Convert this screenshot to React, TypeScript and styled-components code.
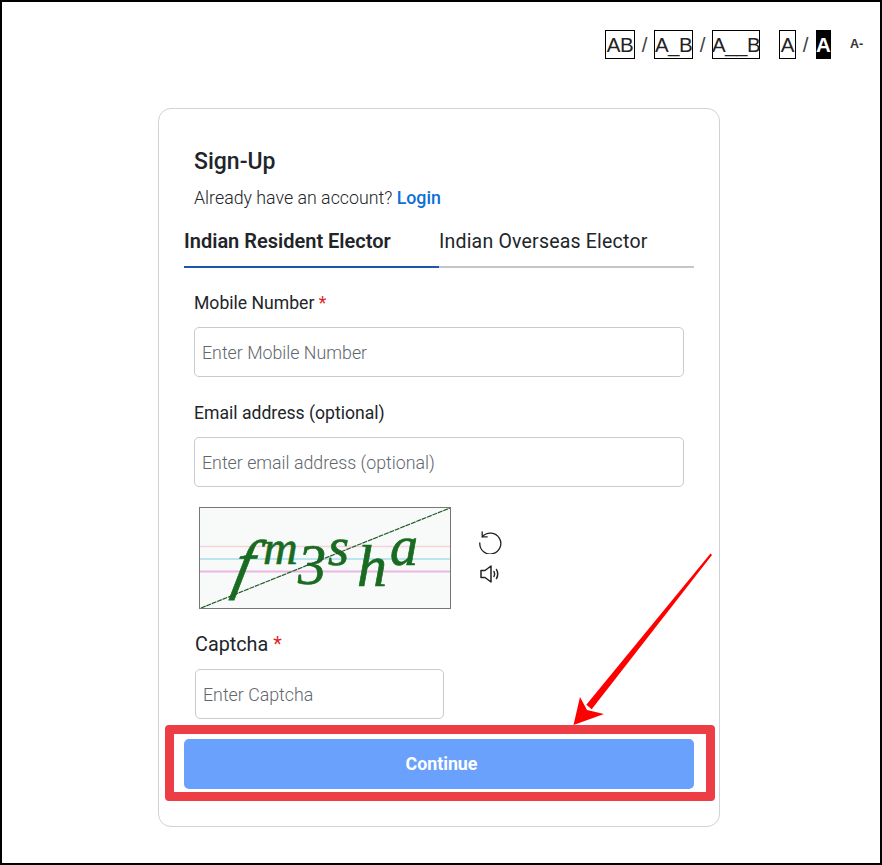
import { createGlobalStyle, styled } from 'styled-components';

const GlobalStyle = createGlobalStyle`
  * { box-sizing: border-box; }
  html, body { margin: 0; padding: 0; background: #fff; }
  body { font-family: Roboto, "Liberation Sans", sans-serif; color: #212529; }
`;

export default function App() {
  return (
    <Frame>
      <GlobalStyle />
      <FontBar>
        <SpacingBox $w={30}>AB</SpacingBox>
        <Slash>/</Slash>
        <SpacingBox $w={39}>A_B</SpacingBox>
        <Slash>/</Slash>
        <SpacingBox $w={48}>A__B</SpacingBox>
        <ContrastBox>A</ContrastBox>
        <Slash>/</Slash>
        <ContrastBox $dark>A</ContrastBox>
        <SmallA>A-</SmallA>
      </FontBar>
      <Card>
        <Title>Sign-Up</Title>
        <Account>
          Already have an account? <LoginLink>Login</LoginLink>
        </Account>
        <Tabs>
          <Tab $active>Indian Resident Elector</Tab>
          <Tab>Indian Overseas Elector</Tab>
        </Tabs>
        <Field>
          <Label>
            Mobile Number <Star>*</Star>
          </Label>
          <Input placeholder="Enter Mobile Number" />
        </Field>
        <Field $top={24}>
          <Label>Email address (optional)</Label>
          <Input placeholder="Enter email address (optional)" />
        </Field>
        <CaptchaRow>
          <CaptchaImage>
            <svg width="250" height="100" viewBox="0 0 250 100">
              <rect width="250" height="100" fill="#f7faf8" />
              <line x1="0" y1="38.500" x2="250" y2="38.500" stroke="#f6d3da" strokeWidth="1.500" />
              <line x1="0" y1="51" x2="250" y2="51" stroke="#a9dcec" strokeWidth="1.500" />
              <line x1="0" y1="63.500" x2="250" y2="63.500" stroke="#ecb5e6" strokeWidth="2" />
              <g
                fill="#1a6b22"
                stroke="#1a6b22"
                strokeWidth="0.700"
                fontFamily='"Liberation Serif", serif'
                fontStyle="italic"
              >
                <text transform="translate(31 78) skewX(-12)" fontSize="66">f</text>
                <text x="63" y="56" fontSize="48">m</text>
                <text x="98" y="76" fontSize="56">3</text>
                <text x="128" y="57" fontSize="54">s</text>
                <text x="157" y="78" fontSize="60">h</text>
                <text x="190" y="57" fontSize="56">a</text>
              </g>
              <line x1="1" y1="100" x2="250" y2="0" stroke="#24592c" strokeWidth="1.200" strokeDasharray="5 0.800" />
            </svg>
          </CaptchaImage>
          <CaptchaActions>
            <svg width="24" height="24" viewBox="0 0 24 24" fill="none" stroke="#222" strokeWidth="1.300" strokeLinecap="round">
              <path d="M4.500 6.500A10.500 10.500 0 1 1 1.800 13" />
              <path d="M4.200 1.800v5h5" />
            </svg>
            <svg width="22" height="20" viewBox="0 0 22 20" fill="none" stroke="#222" strokeWidth="1.500" strokeLinejoin="round" strokeLinecap="round">
              <path d="M2 6.500h4L12 2v16l-6-4.500H2z" />
              <path d="M15 7.500c.8 1.500.8 3.500 0 5" />
              <path d="M17.500 5.500c1.500 2.800 1.500 6.200 0 9" />
            </svg>
          </CaptchaActions>
        </CaptchaRow>
        <CaptchaField>
          <CaptchaLabel>
            Captcha <Star>*</Star>
          </CaptchaLabel>
          <CaptchaInput placeholder="Enter Captcha" />
        </CaptchaField>
        <Continue>Continue</Continue>
        <Highlight />
      </Card>
      <Arrow width="150" height="180" viewBox="0 0 150 180">
        <path d="M140.500 1.500 142 3 21.700 157.200 16.300 152.800z" fill="#f00" />
        <path d="M3.500 173 10 145 17 158 34 162z" fill="#f00" />
      </Arrow>
    </Frame>
  );
}

const Frame = styled.div`
  position: relative;
  width: 882px;
  height: 865px;
  border: 2px solid #000;
  background: #fff;
  overflow: hidden;
`;

const FontBar = styled.div`
  display: flex;
  align-items: center;
  height: 29px;
  margin-top: 28px;
  padding-left: 603px;
  font-family: "Liberation Sans", Arial, sans-serif;
  font-size: 20.500px;
  color: #222;
`;

const SpacingBox = styled.span<{ $w: number }>`
  display: flex;
  align-items: center;
  justify-content: center;
  width: ${(p) => p.$w}px;
  height: 29px;
  border: 1px solid #000;
  letter-spacing: -0.5px;
`;

const Slash = styled.span`
  width: 19px;
  text-align: center;
  color: #444;
`;

const ContrastBox = styled.span<{ $dark?: boolean }>`
  display: flex;
  align-items: center;
  justify-content: center;
  width: ${(p) => (p.$dark ? 15 : 17)}px;
  height: 29px;
  border: ${(p) => (p.$dark ? 'none' : '1px solid #000')};
  margin-left: ${(p) => (p.$dark ? 1 : 19)}px;
  background: ${(p) => (p.$dark ? '#000' : 'transparent')};
  color: ${(p) => (p.$dark ? '#fff' : '#222')};
  font-weight: ${(p) => (p.$dark ? 700 : 400)};
`;

const SmallA = styled.span`
  margin: -2px 0 0 19px;
  font-size: 12.500px;
  font-weight: 700;
  color: #333;
`;

const Card = styled.div`
  position: relative;
  width: 562px;
  height: 719px;
  margin: 49px 0 0 156px;
  padding: 39px 25px 0;
  border: 1px solid #cfd2d6;
  border-radius: 13px;
  background: #fff;
`;

const Title = styled.h2`
  margin: 0 0 0 10px;
  font-size: 23px;
  line-height: 28px;
  font-weight: 500;
  color: #212529;
`;

const Account = styled.div`
  margin: 10px 0 0 10px;
  font-size: 17.800px;
  line-height: 24px;
  font-weight: 300;
  color: #212529;
`;

const LoginLink = styled.a`
  color: #0d6fd8;
  font-weight: 500;
`;

const Tabs = styled.div`
  display: flex;
  height: 49px;
  margin-top: 9px;
  border-bottom: 2px solid #c4c7ca;
`;

const Tab = styled.div<{ $active?: boolean }>`
  width: 255px;
  height: 49px;
  padding-top: ${(p) => (p.$active ? 9 : 10)}px;
  font-size: ${(p) => (p.$active ? 20 : 19.5)}px;
  line-height: 26px;
  font-weight: ${(p) => (p.$active ? 600 : 400)};
  letter-spacing: ${(p) => (p.$active ? 0 : 0.2)}px;
  color: #212529;
  border-bottom: 2px solid ${(p) => (p.$active ? '#1f57a8' : 'transparent')};
`;

const Field = styled.div<{ $top?: number }>`
  margin: ${(p) => p.$top ?? 23}px 10px 0 10px;
`;

const Label = styled.label`
  display: block;
  height: 24px;
  font-size: 17.600px;
  line-height: 24px;
  font-weight: 400;
  color: #212529;
`;

const Star = styled.span`
  color: #e01f26;
`;

const Input = styled.input`
  display: block;
  width: 490px;
  height: 50px;
  margin-top: 12px;
  padding: 0 7px;
  border: 1px solid #c8cacc;
  border-radius: 5px;
  font-family: Roboto, sans-serif;
  font-size: 17.800px;
  font-weight: 300;
  background: #fff;
  &::placeholder { color: #5f676e; opacity: 1; }
`;

const CaptchaRow = styled.div`
  display: flex;
  align-items: center;
  margin: 20px 0 0 15px;
`;

const CaptchaImage = styled.div`
  width: 252px;
  height: 102px;
  border: 1px solid #777;
  svg { display: block; }
`;

const CaptchaActions = styled.div`
  display: flex;
  flex-direction: column;
  align-items: center;
  gap: 10px;
  margin: -2px 0 0 26px;
  width: 26px;
`;

const CaptchaField = styled.div`
  margin: 22px 0 0 11px;
`;

const CaptchaLabel = styled.label`
  display: block;
  height: 28px;
  font-size: 19.800px;
  line-height: 28px;
  color: #212529;
`;

const CaptchaInput = styled(Input)`
  width: 249px;
  margin-top: 10px;
`;

const Continue = styled.button`
  display: block;
  width: 510px;
  height: 50px;
  margin-top: 20px;
  padding: 0 0 2px 5px;
  border: none;
  border-radius: 5px;
  background: #69a1fd;
  color: #fff;
  font-family: Roboto, sans-serif;
  font-size: 17.800px;
  font-weight: 700;
`;

const Highlight = styled.div`
  position: absolute;
  left: 6px;
  top: 616px;
  width: 550px;
  height: 76px;
  border: 9px solid #ee3e45;
  border-radius: 4px;
`;

const Arrow = styled.svg`
  position: absolute;
  left: 568px;
  top: 550px;
`;
